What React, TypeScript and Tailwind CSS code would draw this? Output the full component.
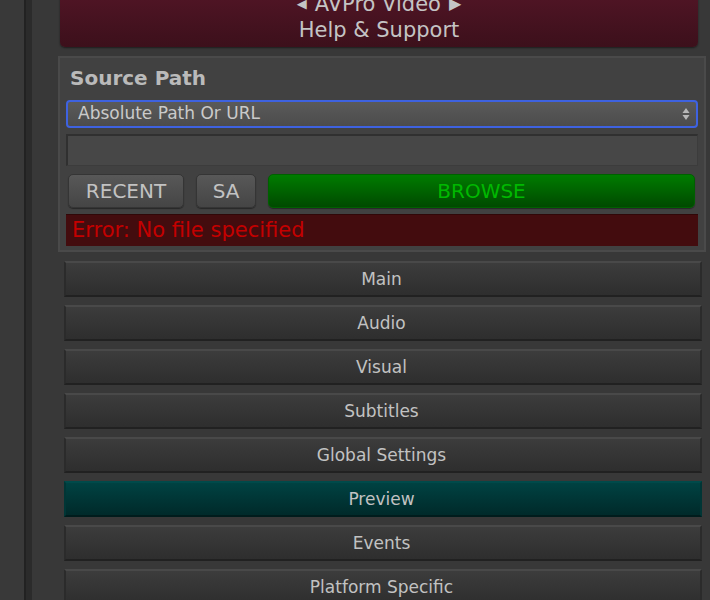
import React from "react";

const font = { fontFamily: '"DejaVu Sans", "Noto Sans", sans-serif' };

const sections = [
  "Main",
  "Audio",
  "Visual",
  "Subtitles",
  "Global Settings",
  "Preview",
  "Events",
  "Platform Specific",
];

const Foldout = ({ label }: { label: string }) => {
  const active = label === "Preview";
  return (
    <div
      className={`h-[36px] w-[638px] shrink-0 flex items-center justify-center pr-[3px] pt-[1px] text-[17px] text-[#c2c2c2] border-t-2 border-b-2 border-l-2 border-r-2 ${
        active
          ? "bg-gradient-to-b from-[#004242] to-[#002a2a] border-t-[#004a4a] border-b-[#001c1c] border-l-[#003636] border-r-[#003636]"
          : "bg-gradient-to-b from-[#3c3c3c] to-[#2e2e2e] border-t-[#494949] border-b-[#212121] border-l-[#2b2b2b] border-r-[#2b2b2b]"
      }`}
    >
      {label}
    </div>
  );
};

export default function App() {
  return (
    <div className="w-[710px] h-[600px] bg-[#383838] overflow-hidden flex" style={font}>
      {/* Left gutter */}
      <div className="w-[24px] shrink-0 bg-[#393939]" />
      <div className="w-[2px] shrink-0 bg-[#222222]" />
      <div className="w-[6px] shrink-0 bg-[#2b2b2b]" />

      <div className="flex-1 flex flex-col">
        {/* Help & Support button */}
        <div className="ml-[28px] w-[638px] h-[67px] mt-[-20px] shrink-0 rounded-[5px] bg-gradient-to-b from-[#561628] to-[#3c101b] shadow-[0_1px_2px_rgba(0,0,0,0.5)] flex flex-col items-center justify-end pb-[4px] text-[21px] leading-[26px] text-[#c4c4c4]">
          <div className="flex items-center gap-[8px]">
            <span className="text-[13px]">◀</span>
            <span>AVPro Video</span>
            <span className="text-[16px]">▶</span>
          </div>
          <div>Help &amp; Support</div>
        </div>

        {/* Source Path panel */}
        <div className="ml-[26px] mt-[9px] w-[648px] h-[196px] shrink-0 border-2 border-[#4a4a4a] bg-[#414141] px-[6px] flex flex-col">
          <div className="h-[40px] flex items-center pl-[4px] text-[20px] font-bold text-[#bababa]">
            Source Path
          </div>
          {/* Dropdown */}
          <div className="h-[28px] mt-[2px] rounded-[4px] border-2 border-[#3e62e0] bg-gradient-to-b from-[#5a5a5a] to-[#4c4c4c] flex items-center justify-between pl-[10px] pr-[6px] text-[17px] text-[#cacaca]">
            <span>Absolute Path Or URL</span>
            <svg width="8" height="14" viewBox="0 0 8 14">
              <path d="M4 1 L7.5 6 L0.5 6 Z" fill="#b8b8b8" />
              <path d="M4 13 L7.5 8 L0.5 8 Z" fill="#b8b8b8" />
            </svg>
          </div>
          {/* Text field */}
          <div className="h-[32px] mt-[6px] bg-[#474747] border-t-2 border-l-2 border-[#303030] border-r border-b border-r-[#3c3c3c] border-b-[#3c3c3c]" />
          {/* Buttons */}
          <div className="h-[34px] mt-[8px] flex gap-[12px] pl-[2px] pr-[3px]">
            <div className="w-[116px] rounded-[5px] bg-gradient-to-b from-[#585858] to-[#454545] border border-[#353535] shadow-[0_1px_1px_rgba(0,0,0,0.4)] flex items-center justify-center text-[20px] text-[#c2c2c2]">
              RECENT
            </div>
            <div className="w-[60px] rounded-[5px] bg-gradient-to-b from-[#585858] to-[#454545] border border-[#353535] shadow-[0_1px_1px_rgba(0,0,0,0.4)] flex items-center justify-center text-[20px] text-[#c2c2c2]">
              SA
            </div>
            <div className="flex-1 rounded-[5px] bg-gradient-to-b from-[#007c00] to-[#004a00] border border-[#006000] shadow-[0_1px_1px_rgba(0,0,0,0.4)] flex items-center justify-center text-[20px] text-[#00b800]">
              BROWSE
            </div>
          </div>
          {/* Error */}
          <div className="h-[32px] mt-[6px] bg-[#430c0e] border-t border-[#300808] flex items-center pl-[6px] text-[21px] text-[#c40000]">
            Error: No file specified
          </div>
        </div>

        {/* Foldouts */}
        <div className="ml-[32px] mt-[9px] flex flex-col gap-[8px]">
          {sections.map((s) => (
            <Foldout key={s} label={s} />
          ))}
        </div>
      </div>
    </div>
  );
}
